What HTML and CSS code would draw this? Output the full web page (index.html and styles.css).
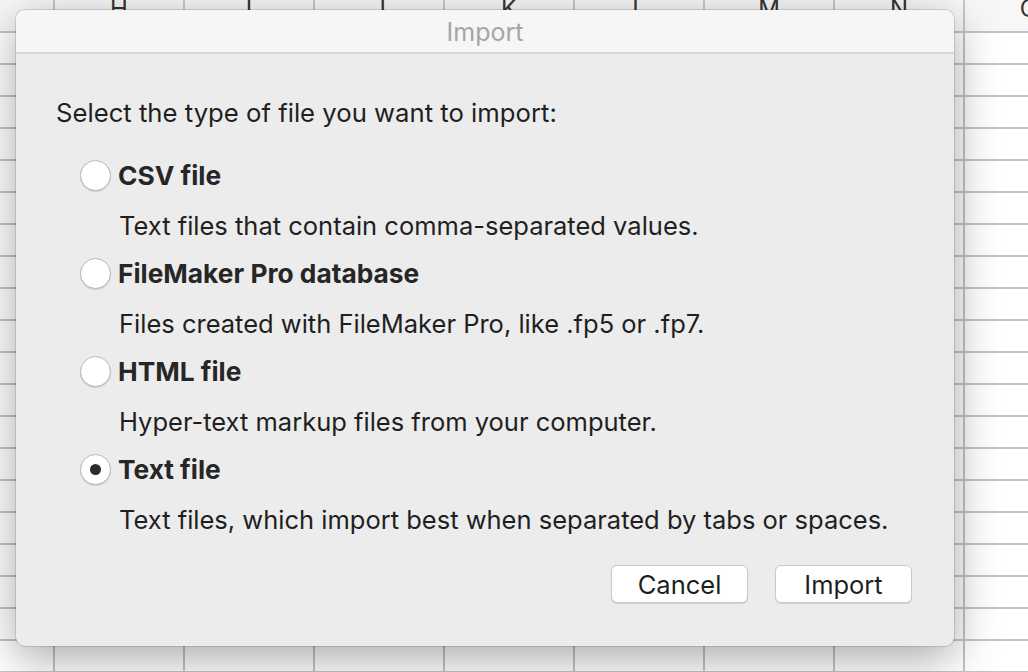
FILE: index.html
```html
<!DOCTYPE html>
<html>
<head>
<meta charset="utf-8">
<link rel="stylesheet" href="styles.css">
</head>
<body>
<div class="sheet">
  <div class="hdr first"></div>
  <div class="hdr"><span>H</span></div>
  <div class="hdr"><span>I</span></div>
  <div class="hdr"><span>J</span></div>
  <div class="hdr"><span>K</span></div>
  <div class="hdr"><span>L</span></div>
  <div class="hdr"><span>M</span></div>
  <div class="hdr"><span>N</span></div>
  <div class="hdr last"><span>O</span></div>
</div>
<div class="rows" id="rows"></div>

<div class="dialog">
  <div class="titlebar">Import</div>
  <div class="body">
    <p class="prompt">Select the type of file you want to import:</p>
    <div class="options">
      <div class="option">
        <div class="radio-row"><span class="radio"></span><span class="label">CSV file</span></div>
        <div class="desc">Text files that contain comma-separated values.</div>
      </div>
      <div class="option">
        <div class="radio-row"><span class="radio"></span><span class="label">FileMaker Pro database</span></div>
        <div class="desc">Files created with FileMaker Pro, like .fp5 or .fp7.</div>
      </div>
      <div class="option">
        <div class="radio-row"><span class="radio"></span><span class="label">HTML file</span></div>
        <div class="desc">Hyper-text markup files from your computer.</div>
      </div>
      <div class="option">
        <div class="radio-row"><span class="radio checked"></span><span class="label">Text file</span></div>
        <div class="desc">Text files, which import best when separated by tabs or spaces.</div>
      </div>
    </div>
    <div class="buttons">
      <button class="btn">Cancel</button>
      <button class="btn">Import</button>
    </div>
  </div>
</div>
</body>
</html>
```
FILE: styles.css
```css
html, body {
  margin: 0;
  padding: 0;
  width: 1028px;
  height: 672px;
  overflow: hidden;
  background: #ffffff;
  font-family: Inter, "Liberation Sans", Arial, sans-serif;
}

.sheet {
  display: grid;
  grid-template-columns: 55px repeat(8, 130px);
  height: 31px;
  background: #f7f7f7;
  border-bottom: 2px solid #c4c4c4;
  overflow: hidden;
}

.hdr {
  border-right: 2px solid #c8c8c8;
  text-align: center;
  font-size: 24px;
  color: #333;
  line-height: 1;
}

.hdr span {
  display: block;
  margin-top: -3px;
}

.rows {
  height: 641px;
  background-color: #ffffff;
  background-image:
    linear-gradient(to bottom, transparent 30px, #c4c4c4 30px, #c4c4c4 32px),
    linear-gradient(to right, transparent 53px, #c4c4c4 53px, #c4c4c4 55px, transparent 55px);
  background-size: 100% 32px, 100% 100%;
  position: relative;
}

.rows::after {
  content: "";
  position: absolute;
  inset: 0;
  background-image: linear-gradient(to right, transparent 128px, #c4c4c4 128px, #c4c4c4 130px);
  background-size: 130px 100%;
  background-position: 55px 0;
}

.dialog {
  position: absolute;
  left: 16px;
  top: 10px;
  width: 938px;
  height: 636px;
  border-radius: 9px;
  background: #ececec;
  box-shadow: 0 0 0 1px rgba(0,0,0,0.12), 0 12px 45px rgba(0,0,0,0.35);
  overflow: hidden;
  display: flex;
  flex-direction: column;
  color: #1f1f1f;
}

.titlebar {
  height: 42px;
  background: #f6f6f6;
  border-bottom: 2px solid #d6d6d6;
  text-align: center;
  font-size: 25px;
  line-height: 45px;
  color: #a5a5a5;
}

.body {
  flex: 1;
  padding: 44px 40px 0 40px;
  display: flex;
  flex-direction: column;
}

.prompt {
  margin: 0;
  font-size: 25.7px;
  line-height: 30px;
}

.options {
  margin-top: 32px;
  padding-left: 24px;
  display: flex;
  flex-direction: column;
  gap: 17px;
}

.option {
  display: flex;
  flex-direction: column;
  gap: 20px;
}

.radio-row {
  display: flex;
  align-items: center;
  gap: 7px;
  height: 31px;
}

.radio {
  width: 29px;
  height: 29px;
  border-radius: 50%;
  background: #ffffff;
  border: 1px solid #b8b8b8;
  box-shadow: 0 1px 1px rgba(0,0,0,0.12);
  position: relative;
  flex: none;
}

.radio.checked::after {
  content: "";
  position: absolute;
  left: 50%;
  top: 50%;
  width: 11px;
  height: 11px;
  margin: -5.5px 0 0 -5.5px;
  border-radius: 50%;
  background: #2b2b2b;
}

.label {
  font-weight: bold;
  font-size: 26.3px;
  color: #262626;
}

.desc {
  padding-left: 39px;
  font-size: 25.5px;
  line-height: 30px;
}

.buttons {
  margin-top: 30px;
  display: flex;
  justify-content: flex-end;
  gap: 27px;
  padding-right: 2px;
}

.btn {
  width: 137px;
  height: 38px;
  border-radius: 6px;
  background: #ffffff;
  border: 1px solid #c9c9c9;
  box-shadow: 0 1px 1px rgba(0,0,0,0.12);
  font-family: Inter, "Liberation Sans", Arial, sans-serif;
  font-size: 25.5px;
  color: #1f1f1f;
  padding: 0;
}
```
